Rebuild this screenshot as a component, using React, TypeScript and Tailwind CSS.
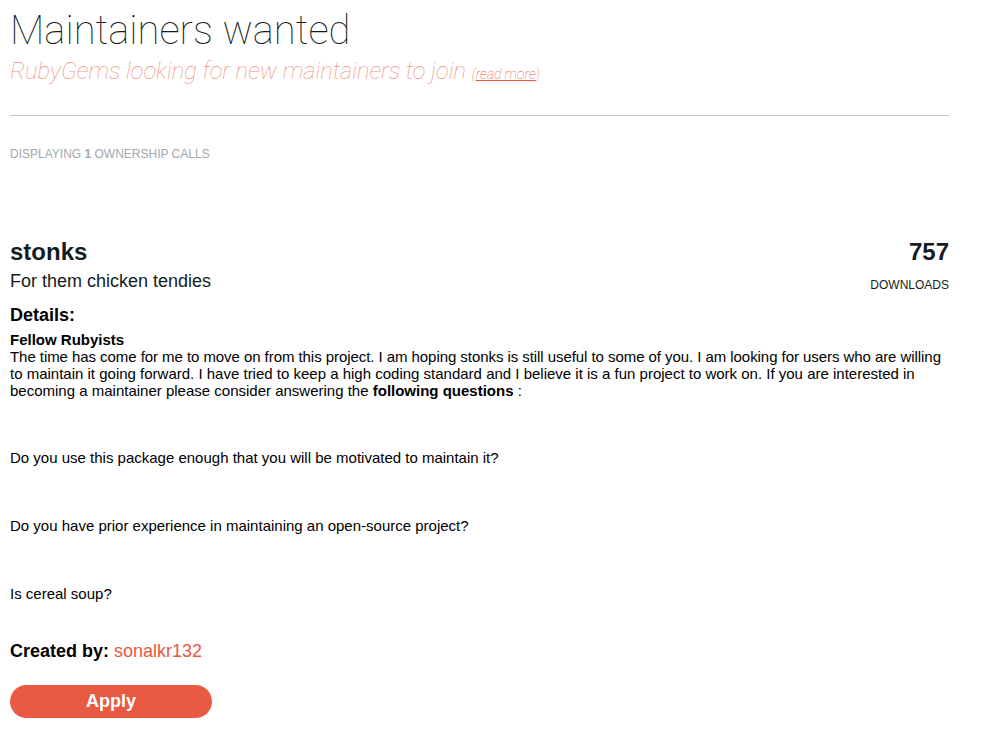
import React from "react"

const questions = [
  "Do you use this package enough that you will be motivated to maintain it?",
  "Do you have prior experience in maintaining an open-source project?",
  "Is cereal soup?",
]

export default function App() {
  return (
    <div className="min-h-screen bg-white font-['Liberation_Sans',Arial,sans-serif] text-black">
      <div className="w-[949px] pl-[10px] pt-[6px]">
        <h1 className="font-['Roboto',sans-serif] font-thin text-[40px] leading-[50px] text-[#141c22]">
          Maintainers wanted
        </h1>
        <p className="font-['Roboto',sans-serif] font-thin italic text-[23.7px] leading-[30px] text-[#f3907f]">
          RubyGems looking for new maintainers to join{" "}
          <span className="text-[14px] text-[#e9573f]">
            (<a href="#" className="underline">read more</a>)
          </span>
        </p>
        <div className="mt-[26px] border-t border-[#c8c8c8]" />

        <p className="mt-[31px] text-[12px] leading-[14px] uppercase text-[#a3a8b2]">
          Displaying <b className="font-bold">1</b> ownership calls
        </p>

        <div className="mt-[77px] flex justify-between">
          <div>
            <h2 className="text-[24px] leading-[28px] font-bold text-[#141c22]">stonks</h2>
            <p className="mt-[4px] text-[18px] leading-[22px] text-[#141c22]">For them chicken tendies</p>
          </div>
          <div className="text-right">
            <p className="text-[24px] leading-[28px] font-bold text-[#141c22]">757</p>
            <p className="mt-[12px] text-[12px] leading-[14px] text-[#141c22]">DOWNLOADS</p>
          </div>
        </div>

        <h3 className="mt-[12px] text-[18px] leading-[22px] font-bold">Details:</h3>
        <div className="mt-[5px] w-[990px] text-[15px] leading-[17px]">
          <p className="font-bold">Fellow Rubyists</p>
          <p>
            <span className="tracking-[-0.06px]">
              The time has come for me to move on from this project. I am hoping stonks is still useful to
              some of you. I am looking for users who are willing
            </span>
            <br />
            to maintain it going forward. I have tried to keep a high coding standard and I believe it is a
            fun project to work on. If you are interested in
            <br />
            becoming a maintainer please consider answering the <b>following questions</b> :
          </p>
          {questions.map((q, i) => (
            <p key={q} className={i === 0 ? "mt-[50px]" : "mt-[51px]"}>
              {q}
            </p>
          ))}
        </div>

        <p className="mt-[38px] text-[18px] leading-[22px]">
          <b>Created by:</b> <a href="#" className="text-[#e9573f]">sonalkr132</a>
        </p>

        <button className="mt-[23px] w-[202px] h-[33px] rounded-full bg-[#e95a42] text-white text-[18px] font-bold">
          Apply
        </button>
      </div>
    </div>
  )
}
